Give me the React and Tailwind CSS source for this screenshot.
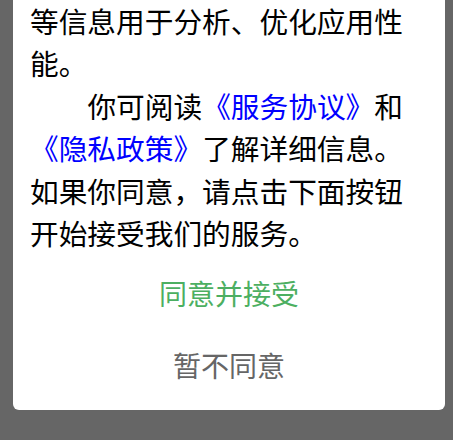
export default function App() {
  return (
    <div className="w-[453px] h-[440px] bg-[#666666] overflow-hidden" style={{ fontFamily: '"Noto Sans CJK SC", "Noto Sans", sans-serif' }}>
      <div className="ml-[13px] w-[432px] bg-white rounded-b-[6px] pb-[9px]">
        <div className="pl-[17px] pr-[17px] pt-0 text-[28.7px] leading-[42.4px] text-black">
          <p>等信息用于分析、优化应用性能。</p>
          <p className="indent-[2em]">
            你可阅读<span className="text-[#0000ff]">《服务协议》</span>和<span className="text-[#0000ff]">《隐私政策》</span>了解详细信息。如果你同意，请点击下面按钮开始接受我们的服务。
          </p>
        </div>
        <div className="mt-[3px] flex flex-col">
          <button className="h-[72px] flex items-center justify-center text-[28px] text-[#4caf61]">同意并接受</button>
          <button className="h-[72px] flex items-center justify-center text-[28px] text-[#666666]">暂不同意</button>
        </div>
      </div>
    </div>
  );
}
